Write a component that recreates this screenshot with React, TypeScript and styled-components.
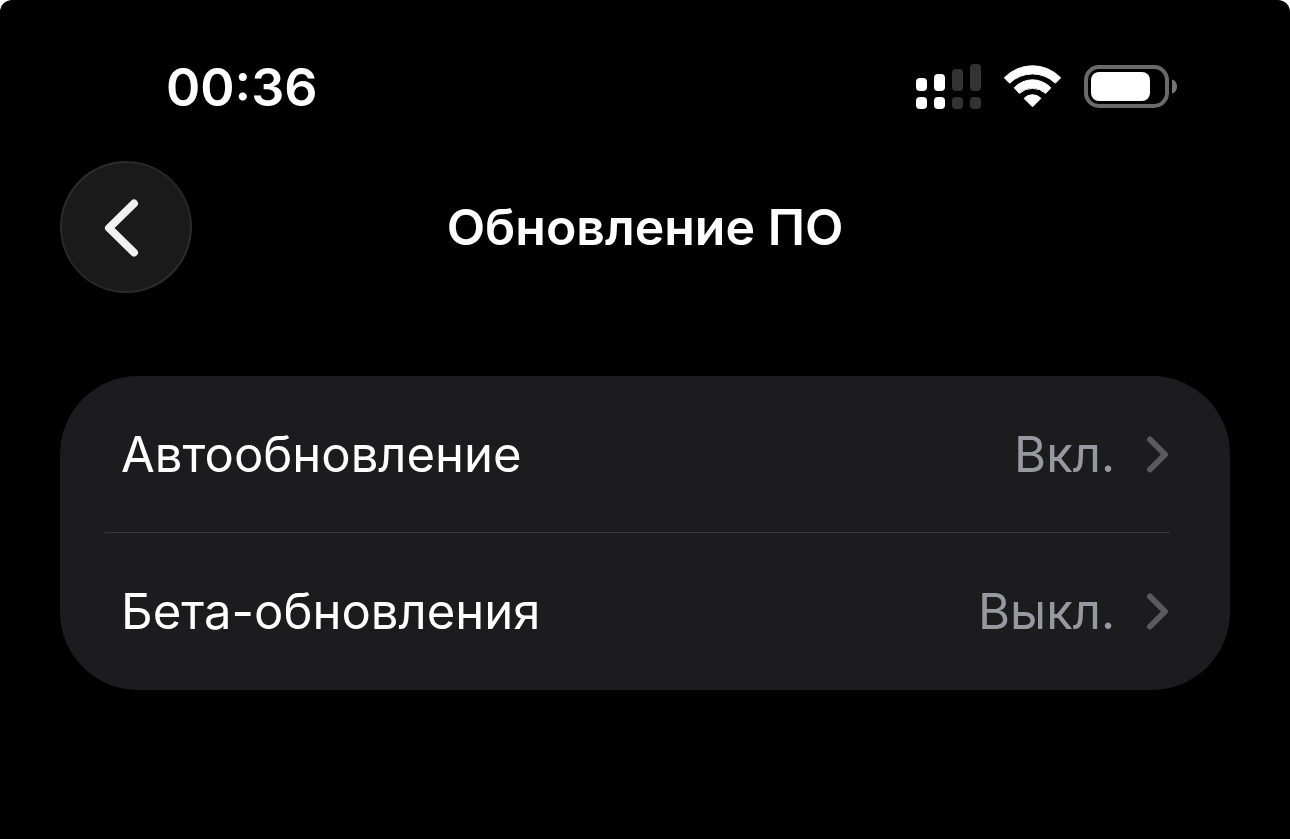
import React from "react";
import styled, { createGlobalStyle } from "styled-components";

const GlobalStyle = createGlobalStyle`
  * { box-sizing: border-box; }
  body {
    margin: 0;
    background: #fff;
    font-family: Inter, "Liberation Sans", sans-serif;
    color: #fff;
  }
`;

const Screen = styled.div`
  min-height: 100vh;
  background: #000;
  border-radius: 12px 12px 0 0;
`;

const StatusBar = styled.div`
  display: flex;
  align-items: center;
  justify-content: space-between;
  padding: 56px 112px 0 166px;
`;

const Clock = styled.time`
  font-size: 52px;
  line-height: 64px;
  font-weight: 600;
`;

const StatusIcons = styled.div`
  display: flex;
  align-items: center;
  gap: 22px;

  svg { display: block; }
`;

const NavBar = styled.header`
  display: grid;
  grid-template-columns: 132px 1fr 132px;
  align-items: center;
  padding: 41px 60px 0;
`;

const BackButton = styled.button`
  display: flex;
  align-items: center;
  justify-content: center;
  width: 132px;
  height: 132px;
  padding: 0;
  border: 2px solid transparent;
  border-radius: 50%;
  background:
    linear-gradient(#1a1a1a, #1a1a1a) padding-box,
    linear-gradient(135deg, #303030, #242424 50%, #303030) border-box;
  cursor: pointer;
`;

const Title = styled.h1`
  margin: 0;
  font-size: 50px;
  line-height: 64px;
  font-weight: 600;
  text-align: center;
`;

const Card = styled.ul`
  margin: 83px 60px 0;
  padding: 0 60px 0 45px;
  list-style: none;
  background: #1c1c1e;
  border-radius: 78px;
`;

const Item = styled.li`
  & + & { box-shadow: 0 -1px #3a3a3c; }
`;

const RowLink = styled.a`
  display: flex;
  align-items: center;
  min-height: 157px;
  padding-left: 16px;
  color: inherit;
  font-size: 49px;
  line-height: 64px;
  text-decoration: none;

  svg { display: block; margin-left: 31px; }
`;

const Label = styled.span`
  flex: 1;
`;

const Value = styled.span`
  color: #98989f;
`;

const SignalIcon = () => (
  <svg width="65" height="48" role="img" aria-label="Signal">
    {[14, 10, 5, 0].map((top, i) => (
      <g key={top} fill={i < 2 ? "#fff" : "#333"}>
        <rect x={i * 18} y={top} width="11" height={27 - top} rx="4" />
        <rect x={i * 18} y="33" width="11" height="12" rx="4" />
      </g>
    ))}
  </svg>
);

const WifiIcon = () => (
  <svg width="59" height="48" fill="#fff" stroke="#fff" strokeWidth="1" strokeLinejoin="round" role="img" aria-label="Wi-Fi">
    <path d="M1.3 13.8A39 39 0 0 1 57.7 13.8L52.3 19.2A32.6 32.6 0 0 0 6.7 19.2Z" />
    <path d="M11.2 23.8A25 25 0 0 1 47.8 23.8L42.6 29.4A19.5 19.5 0 0 0 16.4 29.4Z" />
    <path d="M21.1 34.4A11.4 11.4 0 0 1 37.9 34.4L29.5 42.8Z" />
  </svg>
);

const BatteryIcon = () => (
  <svg width="94" height="48" role="img" aria-label="Battery">
    <rect x="2" y="3" width="81" height="39" rx="13" fill="none" stroke="#6a6a6a" strokeWidth="4" />
    <rect x="7" y="8" width="59" height="29" rx="8" fill="#fff" />
    <path d="M88 15.5C91.5 16.5 93 19.5 93 22.5S91.5 28.5 88 29.5Z" fill="#757575" />
  </svg>
);

const BackIcon = () => (
  <svg width="44" height="60" fill="none" stroke="#f2f2f2" strokeWidth="8" strokeLinecap="round" strokeLinejoin="round" aria-hidden="true">
    <path d="M30 6.5L5 31L30 55.500" />
  </svg>
);

const ChevronIcon = () => (
  <svg width="24" height="40" fill="none" stroke="#5a5a5e" strokeWidth="6" strokeLinecap="round" strokeLinejoin="round" aria-hidden="true">
    <path d="M4 4.5L19 19.5L4 34.5" />
  </svg>
);

const settings = [
  { label: "Автообновление", value: "Вкл.", href: "#auto" },
  { label: "Бета-обновления", value: "Выкл.", href: "#beta" },
];

export default function App() {
  return (
    <Screen>
      <GlobalStyle />
      <StatusBar>
        <Clock>00:36</Clock>
        <StatusIcons>
          <SignalIcon />
          <WifiIcon />
          <BatteryIcon />
        </StatusIcons>
      </StatusBar>
      <NavBar>
        <BackButton type="button" aria-label="Назад">
          <BackIcon />
        </BackButton>
        <Title>Обновление ПО</Title>
      </NavBar>
      <main>
        <Card>
          {settings.map((s) => (
            <Item key={s.label}>
              <RowLink href={s.href}>
                <Label>{s.label}</Label>
                <Value>{s.value}</Value>
                <ChevronIcon />
              </RowLink>
            </Item>
          ))}
        </Card>
      </main>
    </Screen>
  );
}
